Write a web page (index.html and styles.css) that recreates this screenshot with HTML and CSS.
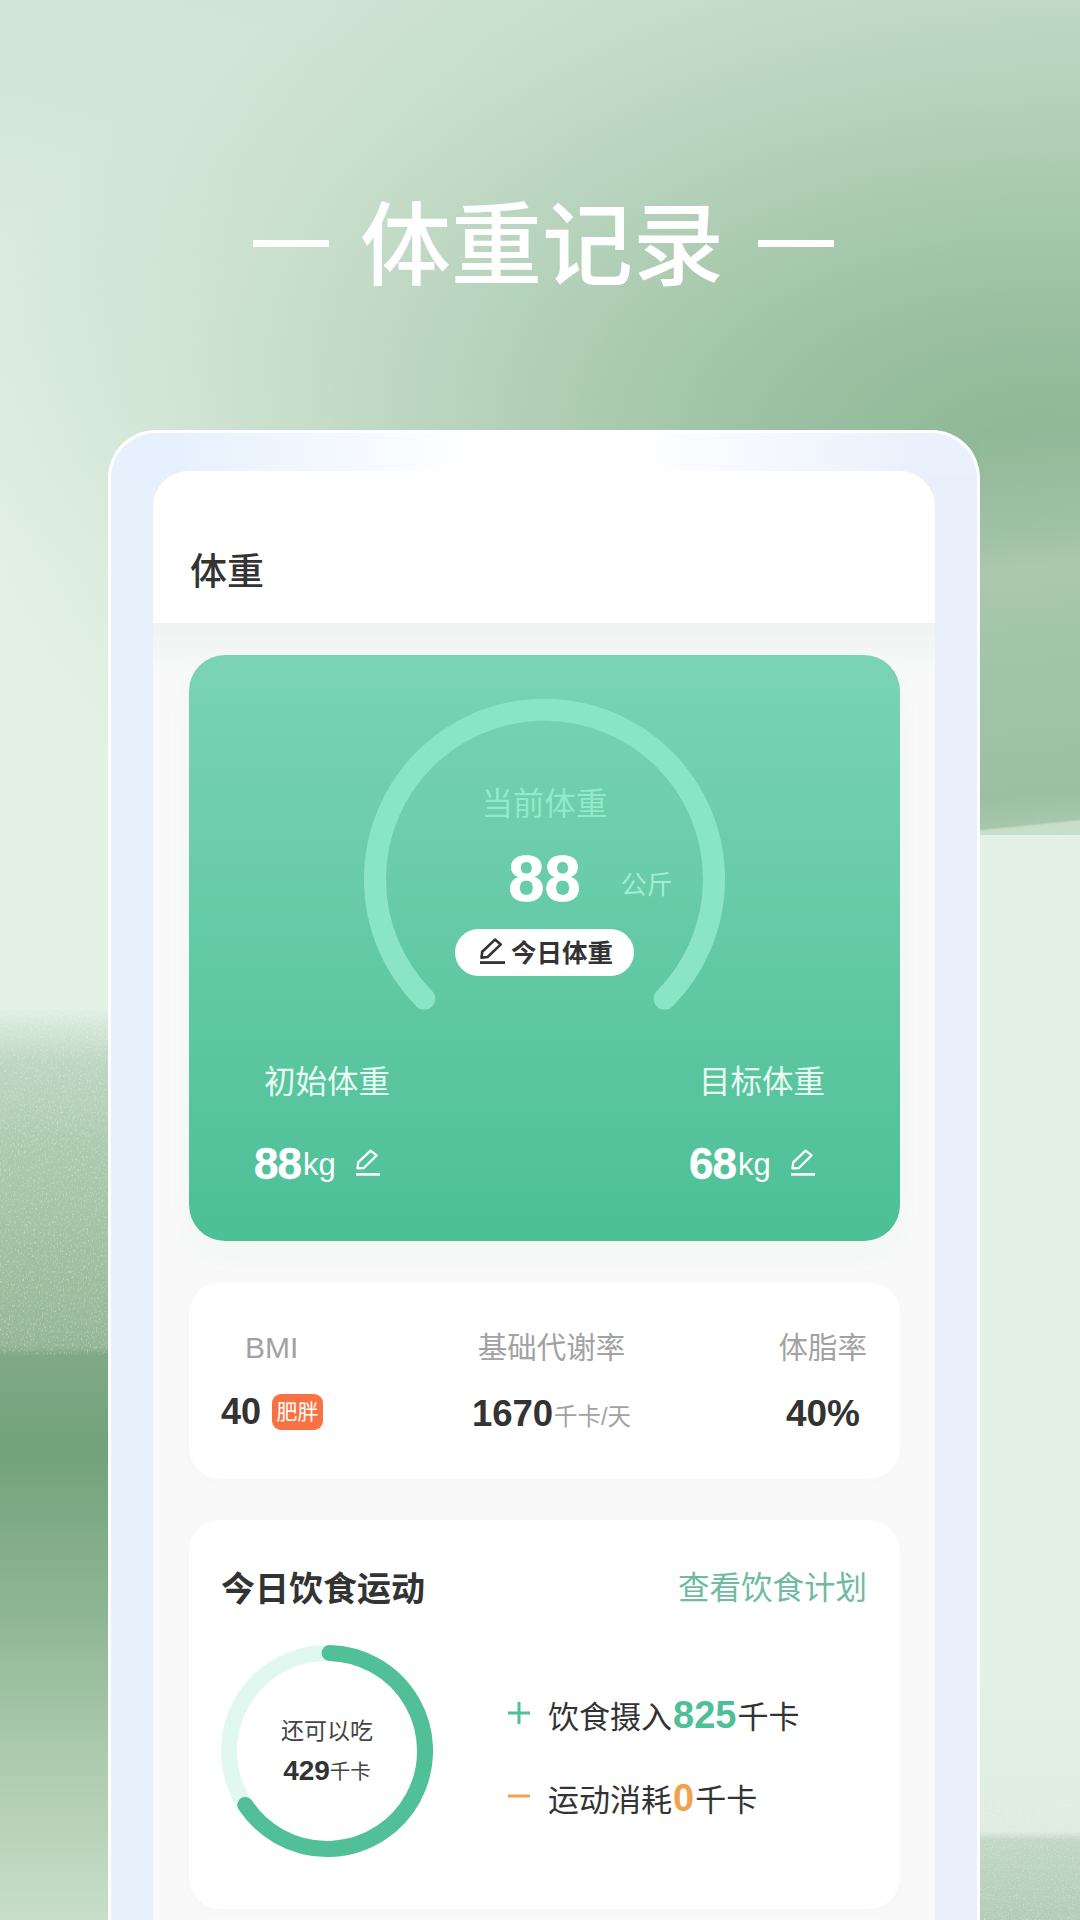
FILE: index.html
```html
<!DOCTYPE html>
<html lang="zh-CN">
<head>
<meta charset="utf-8">
<title>体重记录</title>
<link rel="stylesheet" href="styles.css">
</head>
<body>
<main class="page">
  <header class="hero">
    <span class="dash"></span>
    <h1 class="hero-title">体重记录</h1>
    <span class="dash"></span>
  </header>
  <section class="phone">
    <div class="screen">
      <div class="nav"><h2 class="nav-title">体重</h2></div>
      <div class="content">
        <article class="weight-card">
          <div class="gauge">
            <svg class="gauge-arc" viewBox="0 0 361 320" width="361" height="320" aria-hidden="true">
              <path d="M60.3 300.7A169.5 169.5 0 1 1 300.7 300.7" fill="none" stroke="#8ae5c6" stroke-width="22" stroke-linecap="round"/>
            </svg>
            <div class="gauge-body">
              <div class="gauge-label">当前体重</div>
              <div class="gauge-value">
                <span></span>
                <strong class="gauge-num">88</strong>
                <span class="gauge-unit">公斤</span>
              </div>
              <div class="pill">
                <svg class="pen pen-pill" viewBox="0 0 25 26" width="25" height="26" aria-hidden="true">
                  <path d="M1.5 19.6 2.2 13.8 15 1.6 20.8 6.4 7.6 19Z" fill="none" stroke="currentColor" stroke-width="2.6" stroke-linejoin="round"/>
                  <path d="M0 24.6H25" fill="none" stroke="currentColor" stroke-width="2.8"/>
                </svg>
                <span class="pill-text">今日体重</span>
              </div>
            </div>
          </div>
          <div class="weight-cols">
            <div class="weight-col">
              <div class="weight-label">初始体重</div>
              <div class="weight-row">
                <strong class="weight-num">88</strong><span class="weight-unit">kg</span>
                <svg class="pen pen-small" viewBox="0 0 24 27" width="24" height="27" aria-hidden="true">
                  <path d="M1.5 19.4 2.2 13.4 14.6 1.6 20.6 6.4 7.8 19Z" fill="none" stroke="currentColor" stroke-width="2.3" stroke-linejoin="round"/>
                  <path d="M0 25.4H24" fill="none" stroke="currentColor" stroke-width="2.6"/>
                </svg>
              </div>
            </div>
            <div class="weight-col">
              <div class="weight-label">目标体重</div>
              <div class="weight-row">
                <strong class="weight-num">68</strong><span class="weight-unit">kg</span>
                <svg class="pen pen-small" viewBox="0 0 24 27" width="24" height="27" aria-hidden="true">
                  <path d="M1.5 19.4 2.2 13.4 14.6 1.6 20.6 6.4 7.8 19Z" fill="none" stroke="currentColor" stroke-width="2.3" stroke-linejoin="round"/>
                  <path d="M0 25.4H24" fill="none" stroke="currentColor" stroke-width="2.6"/>
                </svg>
              </div>
            </div>
          </div>
        </article>

        <article class="card stats-card">
          <div class="stat stat-bmi">
            <div class="stat-label stat-label-bmi">BMI</div>
            <div class="stat-value"><strong class="stat-num">40</strong><span class="badge">肥胖</span></div>
          </div>
          <div class="stat stat-bmr">
            <div class="stat-label">基础代谢率</div>
            <div class="stat-value stat-value-low"><strong class="stat-num stat-num-wide">1670</strong><span class="stat-unit">千卡/天</span></div>
          </div>
          <div class="stat stat-fat">
            <div class="stat-label">体脂率</div>
            <div class="stat-value stat-value-low"><strong class="stat-num">40%</strong></div>
          </div>
        </article>

        <article class="card diet-card">
          <div class="diet-head">
            <h3 class="diet-title">今日饮食运动</h3>
            <span class="diet-link">查看饮食计划</span>
          </div>
          <div class="diet-body">
            <div class="ring">
              <svg class="ring-svg" viewBox="0 0 212 212" width="212" height="212" aria-hidden="true">
                <circle cx="106" cy="106" r="98" fill="none" stroke="#e0f8f0" stroke-width="16"/>
                <path d="M108.6 8A98 98 0 1 1 24.3 160" fill="none" stroke="#51bf98" stroke-width="16" stroke-linecap="round"/>
              </svg>
              <div class="ring-text">
                <div class="ring-label">还可以吃</div>
                <div class="ring-value"><strong class="ring-num">429</strong><span class="ring-unit">千卡</span></div>
              </div>
            </div>
            <div class="diet-rows">
              <div class="diet-row">
                <svg class="sign" viewBox="0 0 22 22" width="22" height="22" aria-hidden="true"><path d="M0 11H22M11 0V22" fill="none" stroke="#51bf98" stroke-width="3"/></svg>
                <span class="diet-text">饮食摄入<strong class="diet-num diet-green">825</strong>千卡</span>
              </div>
              <div class="diet-row">
                <svg class="sign" viewBox="0 0 22 22" width="22" height="22" aria-hidden="true"><path d="M0 11H22" fill="none" stroke="#f2a24f" stroke-width="3"/></svg>
                <span class="diet-text">运动消耗<strong class="diet-num diet-orange">0</strong>千卡</span>
              </div>
            </div>
          </div>
        </article>
      </div>
    </div>
  </section>
</main>
</body>
</html>
```

FILE: styles.css
```css
* { box-sizing: border-box; }
html, body { margin: 0; padding: 0; }
body {
  width: 1080px;
  height: 1920px;
  overflow: hidden;
  font-family: "Liberation Sans", "Noto Sans CJK SC", sans-serif;
  color: #333;
}
h1, h2, h3 { margin: 0; font-weight: inherit; }

.page {
  --noise: url("data:image/svg+xml,%3Csvg xmlns='http://www.w3.org/2000/svg' width='240' height='240'%3E%3Cfilter id='n'%3E%3CfeTurbulence type='fractalNoise' baseFrequency='.3 .55' numOctaves='3' seed='7'/%3E%3CfeColorMatrix values='0 0 0 0 1 0 0 0 0 1 0 0 0 0 1 0 0 0 1.1 -.6'/%3E%3C/filter%3E%3Crect width='240' height='240' filter='url(%23n)'/%3E%3C/svg%3E");
  width: 1080px;
  height: 1920px;
  overflow: hidden;
  display: flex;
  flex-direction: column;
  align-items: center;
  background-color: #e4f2e6;
  background-repeat: no-repeat;
  background-image:
    var(--noise),
    var(--noise),
    linear-gradient(180deg, rgba(228,242,230,0) 0%, #dfecdf 66%, #c2d8c5 69%, #b3ccb6 100%),
    linear-gradient(180deg, #dff0e2 0, #bfd6c2 15%, #aac9ae 43%, #9dbd9f 81%, #95b698 97.5%, #7fa985 100%),
    linear-gradient(180deg, #7fa985 0, #72a37a 17%, #8fb694 46%, #aac9ad 69%, #c8dec9 100%),
    linear-gradient(174.3deg, #90b897 0, #9fc1a4 25%, #abc8af 34%, #a3c5a8 50%, #9bc0a1 88%, #a6c7ab 95%, #c4dbc6 95.5%, rgba(228,242,230,0) 95.9%),
    radial-gradient(ellipse 1100px 600px at 1040px 450px, #8db794 0%, rgba(141,183,148,.8) 25%, rgba(141,183,148,.42) 56%, rgba(141,183,148,.14) 80%, rgba(141,183,148,0) 100%),
    linear-gradient(195deg, #cbe1d0 0%, #d5e7d9 35%, #e4f2e6 75%);
  background-size:
    108px 345px,
    100px 120px,
    100px 260px,
    108px 345px,
    108px 565px,
    100px 410px,
    1080px 835px,
    1080px 835px;
  background-position:
    0 1010px,
    980px 1800px,
    980px 1660px,
    0 1010px,
    0 1355px,
    980px 430px,
    0 0,
    0 0;
}

/* Hero */
.hero {
  flex: none;
  height: 430px;
  width: 100%;
  padding: 185px 0 0 7px;
  display: flex;
  justify-content: center;
  align-items: flex-start;
  gap: 31px;
  color: #fff;
}
.hero-title {
  font-family: "Noto Sans CJK SC", sans-serif;
  font-size: 91px;
  line-height: 106px;
  font-weight: 500;
  margin-right: 3px;
}
.dash {
  width: 76px;
  height: 7px;
  margin-top: 55px;
  background: #fff;
}

/* Phone frame */
.phone {
  flex: none;
  width: 872px;
  margin-left: 8px;
  height: 1490px;
  padding: 38px 42px 0;
  border: 3px solid #fff;
  border-bottom: 0;
  border-radius: 48px 48px 0 0;
  background:
    linear-gradient(90deg, #e7f1fd 8%, #ffffff 42%, #ffffff 60%, #ebf1fc 92%) top / 100% 42px no-repeat,
    linear-gradient(90deg, #e6f1fc, #e9effb);
}
.screen {
  height: 1452px;
  border-radius: 36px 36px 0 0;
  background: #f9f9f9;
  overflow: hidden;
}
.nav {
  height: 152px;
  padding: 71px 37px 0;
  background: #fff;
}
.nav-title {
  font-family: "Noto Sans CJK SC", sans-serif;
  font-size: 37px;
  line-height: 54px;
  font-weight: 500;
  color: #333;
}
.content {
  padding: 32px 35px 0 36px;
  display: flex;
  flex-direction: column;
  gap: 41px;
  background: linear-gradient(180deg, #edf3f2 0, #f9f9f9 48px) no-repeat;
}

/* Green card */
.weight-card {
  height: 586px;
  padding-top: 43px;
  border-radius: 36px;
  background: linear-gradient(180deg, #7bd3b6 0%, #4cc096 100%);
  box-shadow: 0 12px 30px rgba(76, 192, 150, .05);
  color: #fff;
}
.gauge {
  display: grid;
  width: 361px;
  height: 326px;
  margin: 0 auto;
}
.gauge-arc, .gauge-body { grid-area: 1 / 1; }
.gauge-arc { display: block; }
.gauge-body {
  display: flex;
  flex-direction: column;
  align-items: center;
  padding-top: 87px;
}
.gauge-label {
  font-size: 31.5px;
  line-height: 38px;
  color: #93e9cb;
}
.gauge-value {
  width: 100%;
  margin-top: 23px;
  display: grid;
  grid-template-columns: 1fr auto 1fr;
  align-items: end;
}
.gauge-num {
  font-size: 65px;
  line-height: 65px;
  font-weight: 700;
  -webkit-text-stroke: .6px #fff;
}
.gauge-unit {
  font-size: 26px;
  line-height: 30px;
  padding: 0 0 11px 40px;
  color: #a6edd3;
  white-space: nowrap;
}
.pill {
  margin-top: 18px;
  width: 179px;
  height: 47px;
  padding-left: 4px;
  border-radius: 24px;
  background: #fff;
  color: #333;
  display: flex;
  align-items: center;
  justify-content: center;
  gap: 6px;
  font-size: 25.5px;
  font-weight: 700;
  white-space: nowrap;
}
.pill-text { margin-top: -5px; }
.pen { display: block; flex: none; }
.pen-pill { margin-top: -3px; }
.weight-cols {
  margin-top: 39px;
  padding: 0 75px 0 65px;
  display: flex;
  justify-content: space-between;
}
.weight-col {
  display: flex;
  flex-direction: column;
  align-items: flex-start;
  color: #f0fff9;
}
.weight-label {
  margin-left: 10px;
  font-size: 31.5px;
  line-height: 38px;
  color: #e9fbf3;
}
.weight-row {
  margin-top: 41px;
  display: flex;
  align-items: flex-end;
  color: #fff;
}
.weight-num {
  font-size: 44px;
  line-height: 44px;
  font-weight: 700;
  letter-spacing: -1px;
  -webkit-text-stroke: .4px #fff;
}
.weight-unit {
  font-size: 31px;
  line-height: 38px;
  margin: 0 0 2px 2px;
}
.pen-small { margin: 0 0 10px 20px; }

/* White cards */
.card {
  border-radius: 32px;
  background: #fff;
  box-shadow: 0 4px 20px rgba(0, 0, 0, .01);
}
.stats-card {
  height: 197px;
  display: grid;
  grid-template-columns: 1fr 1fr 1fr;
  padding: 48px 33px 0 32px;
}
.stat { display: flex; flex-direction: column; }
.stat-bmi { align-items: flex-start; }
.stat-bmr { align-items: center; margin-left: 15px; }
.stat-fat { align-items: flex-end; }
.stat-label {
  font-size: 30px;
  line-height: 36px;
  color: #a2a2a2;
  white-space: nowrap;
}
.stat-bmr .stat-label { font-size: 29.5px; }
.stat-fat .stat-label { font-size: 29.5px; }
.stat-label-bmi { margin-left: 24px; }
.stat-value {
  margin-top: 26px;
  display: flex;
  align-items: center;
  white-space: nowrap;
}
.stat-value-low { margin-top: 28px; align-items: flex-end; }
.stat-fat .stat-value { padding-right: 7px; }
.stat-num {
  font-size: 36px;
  line-height: 40px;
  font-weight: 700;
  color: #333;
}
.stat-fat .stat-num { font-size: 37px; }
.stat-num-wide { font-size: 36.5px; }
.stat-unit {
  margin-left: 1px;
  font-size: 23.5px;
  line-height: 34px;
  color: #a2a2a2;
}
.badge {
  margin-left: 11px;
  width: 51px;
  height: 36px;
  border-radius: 9px;
  background: #f87243;
  color: #fff;
  font-size: 21px;
  line-height: 36px;
  text-align: center;
}
.diet-card {
  height: 389px;
  padding: 46px 33px 0 32px;
}
.diet-head {
  display: flex;
  justify-content: space-between;
  align-items: center;
}
.diet-title {
  font-size: 34px;
  line-height: 46px;
  font-weight: 700;
  color: #333;
}
.diet-link {
  font-size: 31.5px;
  line-height: 46px;
  color: #70baa2;
  margin-top: -3px;
}
.diet-body {
  margin-top: 33px;
  display: flex;
  align-items: center;
}
.ring {
  width: 212px;
  height: 212px;
  display: grid;
  flex: none;
}
.ring-svg, .ring-text { grid-area: 1 / 1; }
.ring-svg { display: block; }
.ring-text {
  display: flex;
  flex-direction: column;
  align-items: center;
  justify-content: center;
}
.ring-label {
  font-size: 23px;
  line-height: 30px;
  color: #444;
}
.ring-value {
  margin-top: 10px;
  display: flex;
  align-items: flex-end;
}
.ring-num {
  font-size: 28px;
  line-height: 30px;
  font-weight: 700;
  color: #333;
}
.ring-unit {
  font-size: 20.5px;
  line-height: 28px;
  color: #444;
}
.diet-rows {
  margin: 13px 0 0 75px;
  display: flex;
  flex-direction: column;
  gap: 34px;
}
.diet-row {
  display: flex;
  align-items: center;
  gap: 18px;
}
.sign { display: block; flex: none; margin-top: -6px; }
.diet-text {
  font-size: 31px;
  line-height: 46px;
  color: #333;
  white-space: nowrap;
}
.diet-num {
  font-size: 38px;
  font-weight: 700;
  padding: 0 1px;
}
.diet-green { color: #4fbf97; }
.diet-orange { color: #f2a24f; }
```
